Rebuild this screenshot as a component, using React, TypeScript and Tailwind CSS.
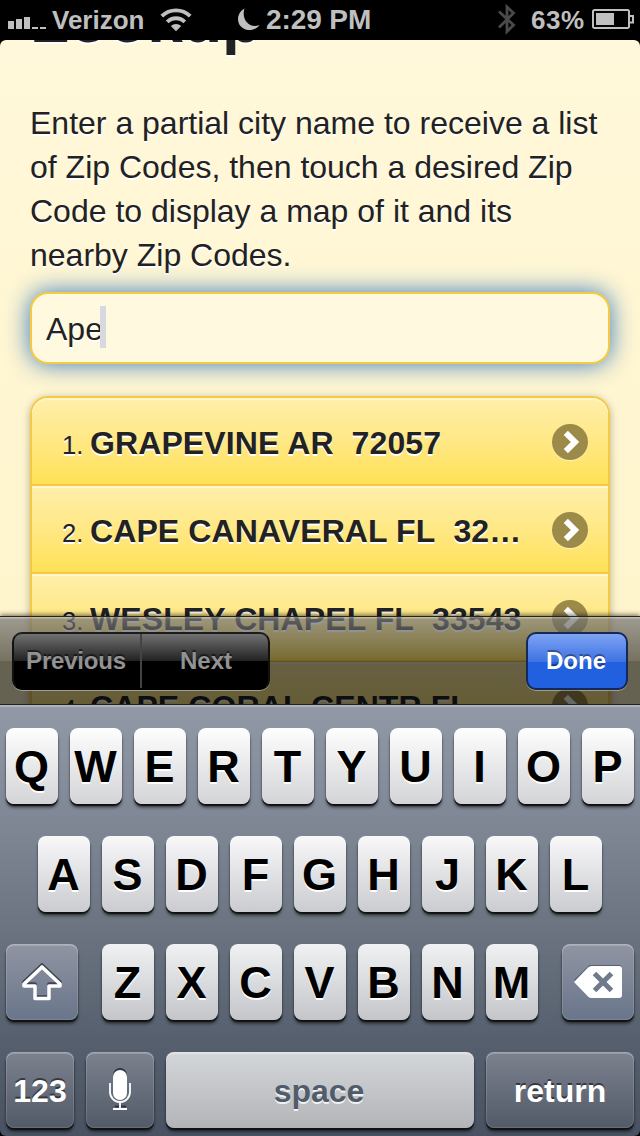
import React from "react";
import clsx from "clsx";

const results = [
  "GRAPEVINE AR\u00a0 72057",
  "CAPE CANAVERAL FL\u00a0 32920",
  "WESLEY CHAPEL FL\u00a0 33543",
  "CAPE CORAL CENTR FL\u00a0 33990",
];

export default function App() {
  return (
    <div className="flex h-[1136px] w-[640px] flex-col overflow-hidden bg-black font-['Liberation_Sans',Arial,sans-serif] text-[#222]">
      <StatusBar />

      <div className="relative h-[665px] shrink-0 overflow-hidden rounded-t-[6px] bg-linear-to-b from-[#fff8da] to-[#fff4ca]">
        <main className="-mt-[55px] flex flex-col px-[30px] [text-shadow:0_2px_0_#fff]">
          <h1 className="h-[94px] text-[64px] leading-[70px] font-bold">Lookup</h1>
          <p className="mt-[22px] w-[600px] text-[32px] leading-[44px]">
            Enter a partial city name to receive a list
            <br />
            of Zip Codes, then touch a desired Zip
            <br />
            Code to display a map of it and its
            <br />
            nearby Zip Codes.
          </p>

          <div className="mt-[15px] flex h-[72px] shrink-0 items-center rounded-[18px] border-2 border-[#f7c942] bg-[#fff9df] pl-[14px] shadow-[0_0_24px_#387bbe]">
            <span className="w-[54px] pt-[2px] text-[32px] leading-9">Ape</span>
            <span className="-mt-[2px] h-[42px] w-[6px] bg-[#d7d9e1]" />
          </div>

          <ol className="mt-8 flex flex-col rounded-t-[18px] border-2 border-[#f7c942] shadow-[0_2px_8px_rgba(0,0,0,0.3)]">
            {results.map((name, i) => (
              <ResultRow key={name} index={i + 1} name={name} />
            ))}
          </ol>
        </main>

        {/* Form assistant floats over the scrolled page */}
        <FormAssistant />
      </div>

      <Keyboard />
    </div>
  );
}

function StatusBar() {
  return (
    <header className="flex h-10 shrink-0 items-center bg-black text-[26px] leading-10 font-bold whitespace-nowrap text-[#bfbfbf]">
      <svg className="ml-2 h-10 w-[38px] shrink-0" viewBox="0 0 38 40" fill="currentColor">
        <path d="M0 21h6v8H0zM8 19h6v10H8zM16 17h6v12h-6zM24 27h6v2h-6zM32 27h6v2h-6z" />
      </svg>
      <span className="ml-[6px] w-[95px] shrink-0">Verizon</span>
      <svg className="ml-[13px] h-10 w-8 shrink-0" viewBox="0 0 32 40">
        <g fill="none" stroke="currentColor" strokeWidth="3.8">
          <path d="M1.8 16.2a20 20 0 0 1 28.4 0" />
          <path d="M7.2 21.900a12.4 12.4 0 0 1 17.6 0" />
        </g>
        <path fill="currentColor" d="M10.8 26a7.6 7.6 0 0 1 10.4 0L16 31.200z" />
      </svg>
      <svg className="ml-[46px] h-10 w-[22px] shrink-0" viewBox="0 0 22 40" fill="currentColor">
        <path d="M6.500 8.500C-2 13-2 25 5.500 28.500C11 31.500 18 30 21.500 25C11 29 3 19 6.500 8.500z" />
      </svg>
      <span className="ml-[6px] w-[107px] shrink-0 text-[28px] tracking-[-0.1px]">2:29 PM</span>
      <svg className="ml-[125px] h-10 w-[18px] shrink-0" viewBox="0 0 18 40" fill="none" stroke="#4a4a4a" strokeWidth="2.8">
        <path d="M1 11.500l14.500 13.500-6.500 6.500V7l6.500 6L1 27.500" />
      </svg>
      <span className="ml-[15px] w-[55px] shrink-0 tracking-[0.6px]">63%</span>
      <svg className="ml-[6px] h-10 w-[42px] shrink-0" viewBox="0 0 42 40">
        <path
          d="M1 11.500a1.500 1.500 0 0 1 1.500-1.500h33a1.500 1.500 0 0 1 1.500 1.500v15a1.500 1.500 0 0 1-1.500 1.500h-33A1.500 1.500 0 0 1 1 26.500zM37 16h4v6.500h-4"
          fill="none"
          stroke="currentColor"
          strokeWidth="2"
        />
        <path d="M4 13h18v12H4z" fill="currentColor" />
      </svg>
    </header>
  );
}

function ResultRow({ index, name }: { index: number; name: string }) {
  return (
    <li
      className={clsx(
        "flex h-[88px] shrink-0 items-center border-b-2 border-[#f7c942] bg-linear-to-b from-[#ffefaa] to-[#ffe155] pr-5 pl-[30px] shadow-[inset_0_2px_0_rgba(255,255,255,0.4)]",
        index === 1 && "rounded-t-[16px]",
      )}
    >
      <span className="flex w-[462px] items-baseline pt-[5px] leading-10">
        <span className="w-[28px] shrink-0 text-[25.6px]">{index}.</span>
        <span className="w-[434px] truncate text-[32px] font-bold tracking-[0.1px]">{name}</span>
      </span>
      <svg className="ml-auto h-[40px] w-9 shrink-0" viewBox="0 0 36 40">
        <circle cx="18" cy="22" r="18" fill="#fff" opacity="0.5" />
        <circle cx="18" cy="21" r="18" fill="#9b8a48" />
        <path d="M13.800 11.800l9.200 9.200-9.200 9.200" fill="none" stroke="#fff" strokeWidth="6" />
      </svg>
    </li>
  );
}

function FormAssistant() {
  return (
    <div className="absolute inset-x-0 bottom-0 flex h-[89px] flex-col shadow-[0_-1px_5px_rgba(0,0,0,0.6)]">
      <div className="flex h-full items-start justify-between border-t border-b border-t-[#26241c] border-b-[#222] bg-[linear-gradient(to_bottom,rgba(165,165,165,0.7)_0,rgba(165,165,165,0.7)_1px,rgba(118,118,118,0.72)_2px,rgba(20,20,20,0.58)_44px,rgba(0,0,0,0.6)_44px)] px-3 pt-[15px] text-[24px] font-bold">
        <div className="flex h-[58px] w-[258px] overflow-hidden rounded-[10px] border-2 border-t-[#1c1c1c] border-x-[#111] border-b-black bg-[linear-gradient(to_bottom,#777_0,#222_29px,#000_29px)] bg-origin-border text-[#929292] shadow-[0_1px_0_rgba(255,255,255,0.4)] [text-shadow:0_-2px_0_rgba(0,0,0,0.5)]">
          <span className="flex w-[128px] items-center justify-center border-r-2 border-[#444] pr-[2px] tracking-[-0.2px]">Previous</span>
          <span className="flex flex-1 items-center justify-center pl-[2px]">Next</span>
        </div>
        <div className="flex h-[58px] w-[102px] items-center justify-center rounded-[10px] border-2 border-[#14285a] bg-[linear-gradient(to_bottom,#7fa3f3_0,#3c72e2_28px,#2160de_28px,#2160de_100%)] pr-[2px] text-white shadow-[0_1px_0_rgba(255,255,255,0.4)] [text-shadow:0_-2px_0_rgba(0,0,0,0.4)]">
          Done
        </div>
      </div>
    </div>
  );
}

function LetterRow({ letters, tone }: { letters: string; tone: string }) {
  return (
    <div className="flex gap-3">
      {letters.split("").map((letter) => (
        <div
          key={letter}
          className={clsx(
            "flex h-[76px] w-[52px] items-center justify-center rounded-[8px] pr-px text-[45px] leading-none font-bold text-black shadow-[0_2px_1px_#111,0_4px_3px_rgba(0,0,0,0.45)] [text-shadow:0_2px_0_#fff]",
            tone,
          )}
        >
          {letter}
        </div>
      ))}
    </div>
  );
}

function DarkKey({ className, children }: { className: string; children: React.ReactNode }) {
  return (
    <div
      className={clsx(
        "flex h-[76px] shrink-0 items-center justify-center rounded-[8px] text-[32px] font-bold text-white shadow-[inset_0_2px_0_rgba(255,255,255,0.2),inset_0_0_0_1px_rgba(255,255,255,0.12),0_2px_1px_#111,0_4px_3px_rgba(0,0,0,0.45)] [text-shadow:0_-2px_0_rgba(0,0,0,0.5)]",
        className,
      )}
    >
      {children}
    </div>
  );
}

function Keyboard() {
  return (
    <section className="flex h-[431px] shrink-0 flex-col gap-8 rounded-b-[6px] border-t-2 border-[#adb2bb] bg-[linear-gradient(to_bottom,#9199a6,#7d8593_30%,#6b7480_51%,#565f6d_78%,#485262)] px-[6px] pt-[21px]">
      <LetterRow letters="QWERTYUIOP" tone="bg-linear-to-b from-[#fefefe] to-[#d3d4d7]" />

      <div className="flex justify-center">
        <LetterRow letters="ASDFGHJKL" tone="bg-linear-to-b from-[#f8f8f9] to-[#cbccd0]" />
      </div>

      <div className="flex justify-between">
        <DarkKey className="w-[72px] bg-linear-to-b from-[#9095a2] to-[#69758a]">
          <svg className="h-[40px] w-[44px]" viewBox="0 0 44 40" fill="none" strokeWidth="3.6" strokeLinejoin="round">
            <path d="M22 3L4 20v2h11v13h14V22h11v-2z" stroke="#3d4552" />
            <path d="M22 5L4 22v2h11v12.500h14V24h11v-2z" stroke="#fff" />
          </svg>
        </DarkKey>
        <LetterRow letters="ZXCVBNM" tone="bg-linear-to-b from-[#f0f1f2] to-[#c5c6ca]" />
        <DarkKey className="w-[72px] bg-linear-to-b from-[#9095a2] to-[#69758a]">
          <svg className="h-[36px] w-[48px]" viewBox="0 0 48 36">
            <path d="M15.500 1H45a3 3 0 0 1 3 3v26H15.500L0 16z" fill="#555f70" />
            <path d="M0 18L14 3.500Q15.500 2 17.500 2H45a3 3 0 0 1 3 3v26a3 3 0 0 1-3 3H17.500Q15.500 34 14 32.500z" fill="#fff" />
            <path d="M20.500 9.500l17 17M37.500 9.500l-17 17" stroke="#707a8c" strokeWidth="5" />
          </svg>
        </DarkKey>
      </div>

      <div className="flex gap-3">
        <DarkKey className="w-[68px] bg-linear-to-b from-[#7c828e] to-[#535a68] pt-[2px]">123</DarkKey>
        <DarkKey className="w-[68px] bg-linear-to-b from-[#7c828e] to-[#535a68]">
          <svg className="h-[44px] w-6" viewBox="0 0 24 44">
            <rect x="5" y="0" width="14" height="30" rx="7" fill="#303641" />
            <path d="M7 38.500h11" stroke="#303641" strokeWidth="2" />
            <rect x="5" y="2" width="14" height="30" rx="7" fill="#fff" />
            <path d="M2 15v9a10 10 0 0 0 20 0v-9M12 34v7M5 41h14" fill="none" stroke="#fff" strokeWidth="1.800" />
          </svg>
        </DarkKey>
        <div className="flex h-[76px] w-[308px] items-center justify-center rounded-[8px] bg-linear-to-b from-[#d4d7d9] to-[#b3b4b8] pt-[2px] pr-[2px] text-[32px] font-bold text-[#515c6a] shadow-[inset_0_2px_0_rgba(255,255,255,0.3),0_2px_1px_#111,0_4px_3px_rgba(0,0,0,0.45)] [text-shadow:0_2px_0_rgba(255,255,255,0.8)]">
          space
        </div>
        <DarkKey className="w-[148px] bg-linear-to-b from-[#7c828e] to-[#535a68] pt-[2px]">return</DarkKey>
      </div>
    </section>
  );
}
